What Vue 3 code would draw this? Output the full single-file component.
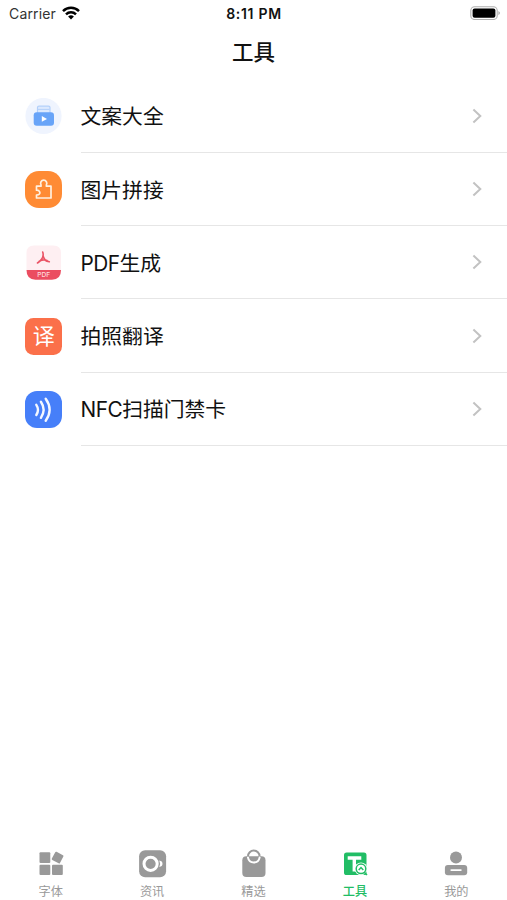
<template>
  <div class="page">
    <header class="status-bar">
      <div class="status-left">
        <span class="carrier">Carrier</span>
        <svg class="wifi" viewBox="0 0 18 14">
          <g fill="none" stroke="#000" stroke-width="2.5">
            <path d="M1 5.1 A11.5 11.5 0 0 1 17 5.1" />
            <path d="M4 8.3 A7.2 7.2 0 0 1 14 8.3" />
          </g>
          <path d="M9 13.6 L6.1 10.6 A4.2 4.2 0 0 1 11.9 10.6 Z" fill="#000" />
        </svg>
      </div>
      <span class="time">8:11 PM</span>
      <div class="status-right">
        <svg class="battery" viewBox="0 0 30 14">
          <rect x="0.8" y="0.7" width="26.4" height="12.8" rx="3.8" fill="#fff" stroke="#b0b0b0" stroke-width="1.1" />
          <rect x="2.6" y="2.5" width="22.8" height="9.2" rx="2" fill="#000" />
          <path d="M28.4 5 Q30 6 30 7.1 Q30 8.2 28.4 9.2 Z" fill="#b0b0b0" />
        </svg>
      </div>
    </header>

    <h1 class="title">工具</h1>

    <ul class="tool-list">
      <li v-for="item in tools" :key="item.icon" class="tool-item">
        <svg class="tool-icon" viewBox="0 0 37 37">
          <g v-if="item.icon === 'copy'">
            <circle cx="18.5" cy="18" r="18.1" fill="#eff4fe" />
            <path d="M12.5 15.5 V9.5 Q12.5 8.2 14 8.2 H23.5 Q25 8.2 25 9.5 V15.5" fill="#dce9fe" stroke="#b3d0fa" stroke-width="1.2" />
            <path d="M13 11.4 H24.5" stroke="#b3d0fa" stroke-width="1" />
            <rect x="8.7" y="14.3" width="20.3" height="13.4" rx="3" fill="#68a4f8" />
            <path d="M16.8 18 L22 20.9 L16.8 23.8 Z" fill="#fff" />
          </g>
          <g v-else-if="item.icon === 'puzzle'">
            <rect width="37" height="37" rx="14" fill="#ff8b34" />
            <path
              d="M11.5 15.2 H16 V13.8 A3.1 3.1 0 1 1 21.4 13.8 V15.2 H26 V27 H11.5 V24 C14.5 23.8 15.3 22.4 14.8 21.1 C14.3 19.8 13.2 19.2 11.5 19.2 Z"
              fill="none" stroke="#fff0df" stroke-width="1.7" stroke-linejoin="round"
            />
          </g>
          <g v-else-if="item.icon === 'pdf'">
            <path d="M1.5 26 V9 Q1.5 1.5 9 1.5 H28.5 Q36 1.5 36 9 V26 Z" fill="#feeff2" />
            <path d="M1.5 26 H36 Q36 35.7 27 35.7 H10.5 Q1.5 35.7 1.5 26 Z" fill="#eb4d60" />
            <path
              d="M17.7 8 C19 11.7 17.5 15.6 12.5 19 M18 11.5 C18.6 14.8 20.8 17.3 24.3 17.8 M14.3 17.3 C17 15.7 19.6 15.5 22 16.5"
              fill="none" stroke="#ea5365" stroke-width="1.6" stroke-linecap="round"
            />
            <text x="18.7" y="33.3" class="pdf-text">PDF</text>
          </g>
          <g v-else-if="item.icon === 'translate'">
            <rect width="37" height="37" rx="8.5" fill="#fb704a" />
            <text x="18.7" y="26.2" class="translate-text">译</text>
          </g>
          <g v-else>
            <rect width="37" height="37" rx="12" fill="#467ff9" />
            <g fill="none" stroke="#f4f8ff" stroke-width="2.4" stroke-linecap="round">
              <path d="M11.3 13.8 Q14.6 18.7 11.3 24" />
              <path d="M15.9 10.8 Q21.3 18.7 15.9 26.8" />
              <path d="M20.7 7.8 Q28.5 18.7 20.7 29.8" />
            </g>
          </g>
        </svg>
        <div class="tool-content">
          <span class="tool-name"><span v-if="item.prefix" class="latin">{{ item.prefix }}</span>{{ item.name }}</span>
          <svg class="arrow" viewBox="0 0 10 16">
            <path d="M1.4 1.5 L8.3 8 L1.4 14.5" fill="none" stroke="#c2c2c2" stroke-width="2" />
          </svg>
        </div>
      </li>
    </ul>

    <nav class="tab-bar">
      <div v-for="tab in tabs" :key="tab.icon" class="tab" :class="{ active: tab.icon === activeTab }">
        <svg class="tab-icon" viewBox="0 0 30 30">
          <g v-if="tab.icon === 'font'" fill="currentColor">
            <rect x="3.5" y="3.3" width="10.8" height="10.8" rx="1" />
            <rect x="3.5" y="15.7" width="10.8" height="10.3" rx="1" />
            <rect x="16" y="15.7" width="10.8" height="10.3" rx="1" />
            <rect x="17" y="4" width="9.2" height="9.2" rx="1" transform="rotate(28 21.6 8.6)" />
          </g>
          <g v-else-if="tab.icon === 'news'">
            <rect x="2.1" y="1.2" width="27" height="27" rx="6" fill="currentColor" />
            <circle cx="13.6" cy="14.8" r="6.6" fill="none" stroke="#fff" stroke-width="3" />
            <path d="M22.3 11.6 Q25.5 12.1 25.5 14.8 Q25.5 17.5 22.3 18 Q23.9 14.8 22.3 11.6 Z" fill="#fff" />
          </g>
          <g v-else-if="tab.icon === 'bag'">
            <path d="M9 9 V7.4 A5.8 5.8 0 0 1 20.6 7.4 V9" fill="none" stroke="currentColor" stroke-width="2" />
            <rect x="3.3" y="7.2" width="23.2" height="20.8" rx="4" fill="currentColor" />
            <path d="M9 8.6 A5.9 5.9 0 0 0 20.6 8.6" fill="none" stroke="#fff" stroke-width="2" stroke-linecap="round" />
          </g>
          <g v-else-if="tab.icon === 'tools'">
            <rect x="4" y="3.5" width="22.5" height="22.5" rx="2.6" fill="currentColor" />
            <path d="M7.7 9 H21.3 M14.3 9 V22.5" fill="none" stroke="#fff" stroke-width="3.4" />
            <circle cx="21" cy="19.8" r="6.4" fill="#fff" />
            <circle cx="21" cy="19.8" r="4.8" fill="#fff" stroke="currentColor" stroke-width="1.5" />
            <path d="M18.7 20.9 L21 18.5 L23.3 20.9" fill="none" stroke="currentColor" stroke-width="1.5" />
            <path d="M24.5 23.5 L26.9 26" stroke="currentColor" stroke-width="1.8" />
          </g>
          <g v-else fill="currentColor">
            <circle cx="15" cy="8.6" r="6" />
            <rect x="3.9" y="15.9" width="22.3" height="10.4" rx="3" />
            <path d="M10.3 21.1 H19.8" stroke="#fff" stroke-width="1.9" stroke-linecap="round" />
          </g>
        </svg>
        <span class="tab-name">{{ tab.name }}</span>
      </div>
    </nav>
  </div>
</template>

<script setup>
import { ref } from 'vue'

const activeTab = ref('tools')

const tools = [
  { icon: 'copy', name: '文案大全' },
  { icon: 'puzzle', name: '图片拼接' },
  { icon: 'pdf', prefix: 'PDF', name: '生成' },
  { icon: 'translate', name: '拍照翻译' },
  { icon: 'nfc', prefix: 'NFC', name: '扫描门禁卡' }
]

const tabs = [
  { icon: 'font', name: '字体' },
  { icon: 'news', name: '资讯' },
  { icon: 'bag', name: '精选' },
  { icon: 'tools', name: '工具' },
  { icon: 'mine', name: '我的' }
]
</script>

<style>
body {
  margin: 0;
  background: #fff;
}
</style>

<style scoped>
.page {
  display: flex;
  flex-direction: column;
  height: 900px;
  background: #fff;
  color: #111;
  font-family: Inter, "Noto Sans CJK SC", sans-serif;
  overflow: hidden;
}
.status-bar {
  display: grid;
  grid-template-columns: 1fr auto 1fr;
  align-items: center;
  height: 26px;
  padding: 0 7px 0 9px;
}
.status-left {
  display: flex;
  align-items: center;
  gap: 6px;
}
.carrier {
  font-size: 14px;
  letter-spacing: 0.15px;
  color: #333;
}
.wifi {
  width: 18px;
  height: 14px;
}
.time {
  padding-top: 1px;
  font-size: 14px;
  font-weight: 600;
  letter-spacing: 0.7px;
  margin-right: 1px;
}
.status-right {
  display: flex;
  justify-content: flex-end;
}
.battery {
  width: 30px;
  height: 14px;
}
.title {
  height: 53.6px;
  margin: 0;
  line-height: 52px;
  font-size: 21.5px;
  font-weight: 500;
  text-align: center;
}
.tool-list {
  flex: 1;
  margin: 0;
  padding: 0;
  list-style: none;
}
.tool-item {
  display: flex;
  align-items: center;
  height: 73.3px;
  padding-left: 25px;
}
.tool-icon {
  width: 37px;
  height: 37px;
  margin-right: 18.5px;
}
.pdf-text {
  font-size: 6.6px;
  font-weight: 500;
  fill: #ffd9de;
  text-anchor: middle;
}
.translate-text {
  font-size: 22px;
  fill: #fff;
  text-anchor: middle;
}
.tool-content {
  display: flex;
  flex: 1;
  align-items: center;
  justify-content: space-between;
  box-sizing: border-box;
  height: 100%;
  padding-right: 25px;
  border-bottom: 1px solid #e6e6e6;
}
.tool-name {
  margin-bottom: 1px;
  font-size: 20.8px;
}
.latin {
  letter-spacing: -0.5px;
}
.arrow {
  width: 10px;
  height: 16px;
}
.tab-bar {
  display: flex;
  height: 51px;
}
.tab {
  display: flex;
  flex: 1;
  flex-direction: column;
  align-items: center;
  color: #999;
}
.tab.active {
  color: #21bd65;
}
.tab-icon {
  width: 30px;
  height: 30px;
}
.tab-name {
  margin-top: 5px;
  line-height: 16px;
  font-size: 12.2px;
}
.tab.active .tab-name {
  font-weight: 500;
}
</style>
